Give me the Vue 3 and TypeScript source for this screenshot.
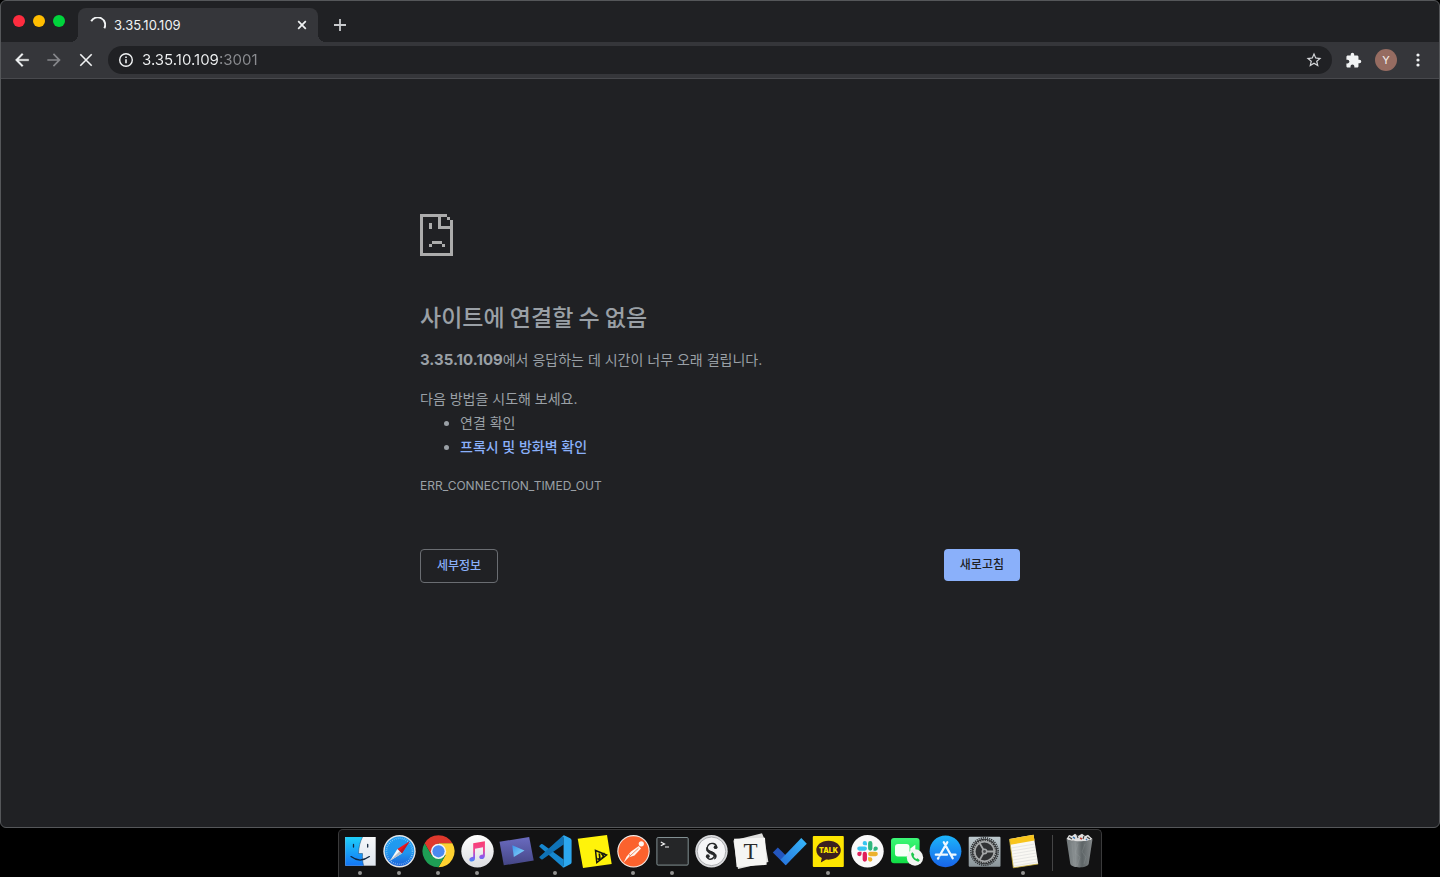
<script setup lang="ts">
import { ref } from 'vue'

const address = ref('3.35.10.109:3001')

const slackArms = [
  { color: '#36c5f0', angle: 0 },
  { color: '#2eb67d', angle: 90 },
  { color: '#ecb22e', angle: 180 },
  { color: '#e01e5a', angle: 270 },
]
</script>

<template>
  <div class="desktop">
    <section class="window">
      <header class="tabstrip">
        <div class="lights">
          <button class="light red" aria-label="Close window"></button>
          <button class="light yellow" aria-label="Minimize window"></button>
          <button class="light green" aria-label="Zoom window"></button>
        </div>
        <div class="tab">
          <svg class="spinner" viewBox="0 0 16 16" aria-hidden="true">
            <path d="M1.200 4.300A7 7 0 0 1 14.300 11.300" fill="none" stroke="#f1f3f4" stroke-width="1.900" />
          </svg>
          <span class="tab-title">3.35.10.109</span>
          <button class="icon-button tab-close" aria-label="Close tab">
            <svg width="16" height="16" viewBox="0 0 16 16"><path d="M4.200 4.200l7.600 7.600M11.800 4.200l-7.600 7.600" stroke="#f1f3f4" stroke-width="1.700" /></svg>
          </button>
        </div>
        <button class="icon-button new-tab" aria-label="New tab">
          <svg width="16" height="16" viewBox="0 0 16 16"><path d="M8 2v12M2 8h12" stroke="#c8cacd" stroke-width="1.800" /></svg>
        </button>
      </header>

      <nav class="toolbar">
        <button class="icon-button nav" aria-label="Back">
          <svg width="20" height="20" viewBox="0 0 24 24" fill="#f1f3f4"><path d="M20 11H7.830l5.590-5.590L12 4l-8 8 8 8 1.410-1.410L7.830 13H20v-2z" stroke="#f1f3f4" stroke-width=".4" /></svg>
        </button>
        <button class="icon-button nav" aria-label="Forward">
          <svg width="20" height="20" viewBox="0 0 24 24" fill="#85868a"><path d="M12 4l-1.410 1.410L16.170 11H4v2h12.170l-5.580 5.590L12 20l8-8z" /></svg>
        </button>
        <button class="icon-button nav" aria-label="Stop">
          <svg width="20" height="20" viewBox="0 0 20 20"><path d="M4.300 4.300l11.400 11.400M15.700 4.300L4.300 15.700" stroke="#f1f3f4" stroke-width="1.600" /></svg>
        </button>
        <div class="omnibox">
          <svg width="16" height="16" viewBox="0 0 16 16" aria-hidden="true">
            <circle cx="8" cy="8" r="6.300" fill="none" stroke="#f1f3f4" stroke-width="1.400" />
            <path d="M8 7.200v4M8 4.500v1.600" stroke="#f1f3f4" stroke-width="1.600" />
          </svg>
          <input v-model="address" class="url" type="text" aria-label="Address" />
          <button class="icon-button" aria-label="Bookmark this page">
            <svg width="18" height="18" viewBox="0 0 24 24" fill="#d5d7da"><path d="M22 9.240l-7.190-.62L12 2 9.190 8.630 2 9.240l5.460 4.730L5.820 21 12 17.270 18.180 21l-1.630-7.030L22 9.240zM12 15.400l-3.760 2.270 1-4.280-3.320-2.880 4.380-.38L12 6.100l1.710 4.040 4.380.38-3.320 2.880 1 4.280L12 15.400z" /></svg>
          </button>
        </div>
        <button class="icon-button extensions" aria-label="Extensions">
          <svg width="17" height="17" viewBox="0 0 24 24" fill="#f1f3f4"><path d="M20.500 11H19V7c0-1.100-.9-2-2-2h-4V3.500a2.500 2.500 0 0 0-5 0V5H4c-1.100 0-1.990.9-1.990 2v3.800H3.500c1.490 0 2.700 1.210 2.700 2.700s-1.210 2.700-2.700 2.700H2V20c0 1.100.9 2 2 2h3.800v-1.500c0-1.490 1.210-2.700 2.700-2.700 1.490 0 2.700 1.210 2.700 2.700V22H17c1.100 0 2-.9 2-2v-4h1.500a2.500 2.500 0 0 0 0-5z" /></svg>
        </button>
        <button class="avatar" aria-label="Profile Y">Y</button>
        <button class="icon-button menu" aria-label="Menu">
          <svg width="18" height="18" viewBox="0 0 18 18" fill="#f1f3f4"><circle cx="9" cy="4" r="1.600" /><circle cx="9" cy="9" r="1.600" /><circle cx="9" cy="14" r="1.600" /></svg>
        </button>
      </nav>

      <main class="page">
        <div class="message">
          <svg class="sad" viewBox="0 0 33 42" fill="#acacac" shape-rendering="crispEdges" aria-hidden="true">
            <path d="M0 0H27V3H3V39H30V15H18V3H21V12H30V6H33V42H0ZM27 3H30V6H27ZM9 9H12V15H9ZM12 27H22V30H12ZM9 30H12V33H9ZM22 30H25V33H22Z" />
          </svg>
          <h1>사이트에 연결할 수 없음</h1>
          <p class="summary"><strong>3.35.10.109</strong>에서 응답하는 데 시간이 너무 오래 걸립니다.</p>
          <p class="hint">다음 방법을 시도해 보세요.</p>
          <ul>
            <li>연결 확인</li>
            <li><a href="#">프록시 및 방화벽 확인</a></li>
          </ul>
          <p class="code">ERR_CONNECTION_TIMED_OUT</p>
          <div class="actions">
            <button class="details">세부정보</button>
            <button class="reload">새로고침</button>
          </div>
        </div>
      </main>
    </section>

    <footer class="shelf">
      <div class="dock">
        <button class="app running" aria-label="Finder">
          <svg viewBox="0 0 39 40">
            <defs>
              <linearGradient id="finderBlue" x1="0" y1="0" x2="0" y2="1"><stop offset="0" stop-color="#1fd0fb" /><stop offset="1" stop-color="#1375f5" /></linearGradient>
              <linearGradient id="finderPale" x1="0" y1="0" x2="0" y2="1"><stop offset="0" stop-color="#f6f8fa" /><stop offset="1" stop-color="#dfe6ef" /></linearGradient>
            </defs>
            <rect x="4.300" y="6" width="30.400" height="28.700" fill="url(#finderPale)" />
            <path d="M4.300 6H21.500C19 11 17.800 16 17.500 22.500H21.500C21.300 27 21.600 31 22.600 34.700H4.300Z" fill="url(#finderBlue)" />
            <path d="M21.500 6C19 11 17.800 16 17.500 22.500H21.500C21.300 27 21.600 31 22.600 34.700" fill="none" stroke="#16466f" stroke-width=".5" />
            <path d="M12.500 13.500v2.600M26.700 13.500v2.600M10 25.600Q19 32.500 28.400 25.600" fill="none" stroke="#10263e" stroke-width="1.300" stroke-linecap="round" />
          </svg>
        </button>
        <button class="app running" aria-label="Safari">
          <svg viewBox="0 0 39 40">
            <defs><linearGradient id="safariBlue" x1="0" y1="0" x2="0" y2="1"><stop offset="0" stop-color="#1e9df2" /><stop offset=".55" stop-color="#2196ee" /><stop offset="1" stop-color="#1c62da" /></linearGradient></defs>
            <circle cx="19.500" cy="20.300" r="16.200" fill="#e6e7e9" />
            <circle cx="19.500" cy="20.300" r="14.800" fill="url(#safariBlue)" />
            <circle cx="19.500" cy="20.300" r="13" fill="none" stroke="#bfe3ff" stroke-width="1.600" stroke-dasharray=".5 1.540" />
            <path d="M29.700 10.300L17.400 18 21.800 22.500Z" fill="#f5151b" />
            <path d="M29.700 10.300L21.800 22.500 19.600 20.200Z" fill="#bb1c28" />
            <path d="M10 29.700L17.400 18 21.800 22.500Z" fill="#f7f8f9" />
            <path d="M10 29.700L21.800 22.500 19.600 20.200Z" fill="#b9bdc5" />
          </svg>
        </button>
        <button class="app running" aria-label="Chrome">
          <svg viewBox="0 0 39 40">
            <g transform="translate(19.500 20.300)">
              <path d="M0-8H13.860A16 16 0 0 0-13.860-8L-6.930 4Z" fill="#df382c" />
              <path d="M0-8H13.860A16 16 0 0 0-13.860-8L-6.930 4Z" fill="#fed130" transform="rotate(120)" />
              <path d="M0-8H13.860A16 16 0 0 0-13.860-8L-6.930 4Z" fill="#1e9e55" transform="rotate(240)" />
              <circle r="7.600" fill="#f4f5f5" />
              <circle r="6.100" fill="#4a89f0" />
            </g>
          </svg>
        </button>
        <button class="app running" aria-label="Music">
          <svg viewBox="0 0 39 40">
            <defs>
              <linearGradient id="note" x1="0" y1="0" x2="0" y2="1"><stop offset="0" stop-color="#fb3c70" /><stop offset=".45" stop-color="#ee4a93" /><stop offset=".75" stop-color="#8f55ec" /><stop offset="1" stop-color="#3f8df5" /></linearGradient>
              <linearGradient id="musicDisc" x1="0" y1="0" x2="0" y2="1"><stop offset="0" stop-color="#fff" /><stop offset="1" stop-color="#dcdde1" /></linearGradient>
            </defs>
            <circle cx="19.500" cy="20.300" r="16.200" fill="url(#musicDisc)" />
            <path d="M15.200 12.300L26.900 10.300V24.500C26.900 27 25.400 28.100 23.600 28.100 20.700 28.100 20.500 24.500 23.300 23.800L25 23.400V16.200L17 17.700V27.200C17 29.400 15.500 30.500 13.700 30.500 10.800 30.500 10.600 27 13.300 26.200L15.200 25.700Z" fill="url(#note)" />
          </svg>
        </button>
        <button class="app" aria-label="Video player">
          <svg viewBox="0 0 39 40">
            <defs>
              <linearGradient id="purple" x1="0" y1="0" x2="0" y2="1"><stop offset="0" stop-color="#6a6bc0" /><stop offset="1" stop-color="#454686" /></linearGradient>
              <linearGradient id="play" x1="0" y1="0" x2="1" y2="1"><stop offset="0" stop-color="#3b92ea" /><stop offset="1" stop-color="#8edcfb" /></linearGradient>
            </defs>
            <path d="M2.500 10.800L32.200 6 36.700 29.500 6.800 34.300Z" fill="url(#purple)" />
            <path d="M15.300 14.300L27.500 19.500 16.800 26Z" fill="url(#play)" />
          </svg>
        </button>
        <button class="app running" aria-label="Code editor">
          <svg viewBox="0 0 39 40">
            <path d="M3.500 15.700Q3 15 3.700 14.400L5.300 13.100Q6 12.700 6.700 13.200L27.600 28.500V36.300L26 35.600Z" fill="#1687cf" />
            <path d="M3.500 25.700Q3 26.400 3.700 27L5.300 28.300Q6 28.700 6.700 28.200L27.600 13.500V4.400L26 5.600Z" fill="#0f72b6" />
            <path d="M25.800 35.400C26.700 36.100 27.600 35.200 27.600 34.200V7C27.600 5.600 26.600 4.800 25.800 5.600L28 4.300 34.200 7.200Q35.600 8 35.600 9.500V31.200Q35.600 32.500 34.200 33.300L28.400 36.300Q27 37 25.800 35.400Z" fill="#2ca7ef" />
          </svg>
        </button>
        <button class="app" aria-label="Yellow note">
          <svg viewBox="0 0 39 40">
            <path d="M2.700 7.800L32 4 36.700 33 8 37Z" fill="#fff30a" />
            <path d="M20.500 19.500L21.800 31.500 31.500 24Z" fill="none" stroke="#151510" stroke-width="1.500" />
            <path d="M24.300 22.500l.8 6.500M22.300 27.500l2.800 1.300M29.500 22.300l-2.300 1 1.600 2.200-2 1.700" fill="none" stroke="#151510" stroke-width="1.700" />
          </svg>
        </button>
        <button class="app running" aria-label="Postman">
          <svg viewBox="0 0 39 40">
            <circle cx="19.500" cy="20.300" r="16.200" fill="#f5ece7" />
            <circle cx="19.500" cy="20.300" r="15.100" fill="#fb622d" />
            <circle cx="27.300" cy="12.800" r="2.600" fill="#fff4ed" />
            <path d="M24.800 15L27 17.400 20.500 24.600 14.500 26.500 9.500 31.800 12.500 25.800 17 20.500Z" fill="#fff4ed" />
            <path d="M24.500 17.200L14.800 26M16.500 25.200l-1.200-2" stroke="#e8612c" stroke-width=".7" />
          </svg>
        </button>
        <button class="app running" aria-label="Terminal">
          <svg viewBox="0 0 39 40">
            <rect x="3.900" y="6.500" width="31.300" height="27.600" rx="1.200" fill="#252628" stroke="#829093" />
            <path d="M7.800 11l3.700 1.900-3.700 1.900M12 16h4" fill="none" stroke="#f0f0f0" stroke-width="1.200" />
          </svg>
        </button>
        <button class="app" aria-label="Scrivener">
          <svg viewBox="0 0 39 40">
            <circle cx="19.500" cy="20.300" r="16.200" fill="#dadbde" />
            <circle cx="19.500" cy="20.300" r="14.300" fill="#f5f5f7" stroke="#9b9ca0" stroke-width=".8" />
            <path d="M24.500 16.500C24.500 12 18.500 11 16 14.500 13.800 18 16.500 19.800 19.500 21 22.500 22.300 23.300 23.700 21.800 26.300 19 29.800 14.500 28 15 24.700" fill="none" stroke="#26282a" stroke-width="1.400" />
            <path d="M14.900 16.500C15 20 18 20.200 20.800 21.300 25 23 25 26 22.600 28.200 24 24.800 21 23.800 18.200 22.600 15 21.200 13.800 19 14.900 16.500Z" fill="#26282a" stroke="#26282a" />
            <circle cx="23.600" cy="16.200" r="1.900" fill="#26282a" /><circle cx="15.800" cy="25.200" r="1.900" fill="#26282a" />
          </svg>
        </button>
        <button class="app" aria-label="Typora">
          <svg viewBox="0 0 39 40">
            <path d="M2.400 9.500L18 5.500 31 2.300 33.400 8 37.400 31 22 34.500 7 38 5.200 28Z" fill="#dededd" />
            <path d="M3 7.800L34 6.700 35.700 33.800 5.600 36Z" fill="#f5f5f4" />
            <text x="19.500" y="28" text-anchor="middle" font-family="Liberation Serif, serif" font-size="23" fill="#292929">T</text>
          </svg>
        </button>
        <button class="app" aria-label="To Do">
          <svg viewBox="0 0 39 40">
            <defs><linearGradient id="tick" x1="0" y1="1" x2="1" y2="0"><stop offset="0" stop-color="#2773dc" /><stop offset="1" stop-color="#36bafb" /></linearGradient></defs>
            <path d="M2.800 21.500L7.800 16.400 20.500 29 15.700 34.300Z" fill="#2456be" />
            <path d="M10.500 28.800L31.300 7 36.800 12.800 15.700 34.300Z" fill="url(#tick)" />
          </svg>
        </button>
        <button class="app running" aria-label="KakaoTalk">
          <svg viewBox="0 0 39 40">
            <rect x="3.800" y="5" width="31" height="31" rx="1" fill="#fde500" />
            <path d="M19.500 9.700C12 9.700 7.300 14 7.300 19.100 7.300 22.500 9.300 25.400 12.800 27L11.800 31.600 17 28.500C26 29.500 31.800 24.800 31.800 19.100 31.800 14 27 9.700 19.500 9.700Z" fill="#3b2020" />
            <text x="19.500" y="22" text-anchor="middle" font-family="Inter, sans-serif" font-weight="900" font-size="7" fill="#fde500">TALK</text>
          </svg>
        </button>
        <button class="app" aria-label="Slack">
          <svg viewBox="0 0 39 40">
            <circle cx="19.500" cy="20.300" r="16.200" fill="#f9f9fa" />
            <g transform="translate(9.200 10) scale(.860)">
              <path v-for="arm in slackArms" :key="arm.color" :fill="arm.color" :transform="`rotate(${arm.angle} 12 12)`" d="M8.834 5.042a2.528 2.528 0 0 1-2.521-2.520A2.528 2.528 0 0 1 8.834 0a2.528 2.528 0 0 1 2.521 2.522v2.520H8.834zM8.834 6.313a2.528 2.528 0 0 1 2.521 2.521 2.528 2.528 0 0 1-2.521 2.521H2.522A2.528 2.528 0 0 1 0 8.834a2.528 2.528 0 0 1 2.522-2.521h6.312z" />
            </g>
          </svg>
        </button>
        <button class="app" aria-label="FaceTime">
          <svg viewBox="0 0 39 40">
            <defs><linearGradient id="face" x1="0" y1="0" x2="0" y2="1"><stop offset="0" stop-color="#3cf777" /><stop offset="1" stop-color="#10dc45" /></linearGradient></defs>
            <rect x="4" y="7" width="28.600" height="25.300" rx="3" fill="url(#face)" />
            <rect x="8" y="13" width="14.500" height="12.500" rx="3" fill="#f5fff8" />
            <path d="M23.300 17.500L28.300 13.700V25L23.300 21.500Z" fill="#f5fff8" />
            <circle cx="28" cy="26.500" r="8.200" fill="#f2f4f3" />
            <path d="M24.300 22.300C23.500 25.500 27.500 30.300 31.500 30.700L32.800 29.200 30.600 27.200 29.200 28C27.900 27.300 27.200 26.400 26.600 25.100L27.400 23.700 25.600 21.200Z" fill="#1dc74d" />
          </svg>
        </button>
        <button class="app" aria-label="App Store">
          <svg viewBox="0 0 39 40">
            <defs><linearGradient id="store" x1="0" y1="0" x2="0" y2="1"><stop offset="0" stop-color="#1cb5fb" /><stop offset="1" stop-color="#1864ea" /></linearGradient></defs>
            <circle cx="19.500" cy="20.300" r="15.900" fill="url(#store)" />
            <path d="M17.800 11.300L26.700 27.200M21.300 11.300L13.700 24.500M9.800 23.700H21M25.700 23.700H29.500M12.500 26.700l-.5.900" fill="none" stroke="#edf8ff" stroke-width="2.300" stroke-linecap="round" />
          </svg>
        </button>
        <button class="app" aria-label="System Preferences">
          <svg viewBox="0 0 39 40">
            <defs><linearGradient id="prefs" x1="0" y1="0" x2="0" y2="1"><stop offset="0" stop-color="#bdc9ce" /><stop offset="1" stop-color="#8b959a" /></linearGradient></defs>
            <rect x="3.700" y="5.700" width="31.800" height="30" rx="1" fill="url(#prefs)" />
            <circle cx="19.500" cy="20.500" r="13.700" fill="none" stroke="#303234" stroke-width="1.500" stroke-dasharray="1.250 .900" />
            <circle cx="19.500" cy="20.500" r="12.800" fill="#303234" />
            <circle cx="19.500" cy="20.500" r="9.800" fill="none" stroke="#a4a7a8" stroke-width="1.700" />
            <circle cx="19.500" cy="20.500" r="11.200" fill="none" stroke="#a4a7a8" stroke-width="1.200" stroke-dasharray="1.170 1.170" />
            <path d="M19.500 20.500L14.500 11.900M19.500 20.500H29.500M19.500 20.500L14.500 29.100" stroke="#a4a7a8" stroke-width="1.800" />
            <circle cx="19.500" cy="20.500" r="2.900" fill="#a4a7a8" /><circle cx="19.500" cy="20.500" r="1.400" fill="#4b4d4f" />
          </svg>
        </button>
        <button class="app running" aria-label="Notes">
          <svg viewBox="0 0 39 40">
            <path d="M5.500 8L29.500 3.700 34.200 33 9.300 36.800Z" fill="#f9f8f3" />
            <path d="M5.500 8L29.500 3.700 30.600 9.600 6.300 13.700Z" fill="#f8c51c" />
            <path d="M7.200 17l23.500-4M7.700 20l23.500-4M8.200 23l23.500-4M8.600 26l23.500-4M9 29l23.500-4M9.300 32l23.800-4M9.600 35l23.800-4" stroke="#dededc" stroke-width=".7" />
            <path d="M5.500 8L9.300 36.800 34.200 33" fill="none" stroke="#c8ac34" stroke-width=".8" />
          </svg>
        </button>
        <span class="divider"></span>
        <button class="app" aria-label="Trash">
          <svg viewBox="0 0 39 40">
            <defs><linearGradient id="bin" x1="0" y1="0" x2="1" y2="0"><stop offset="0" stop-color="#6f7678" /><stop offset=".35" stop-color="#8a9092" /><stop offset=".6" stop-color="#5d6466" /><stop offset="1" stop-color="#84898b" /></linearGradient></defs>
            <path d="M6.500 8.300C10 10.500 29 10.500 32.500 8.300L28.700 33C27 37.500 12 37.500 10.300 33Z" fill="url(#bin)" />
            <path d="M6.500 8L9 4 12 5 15 2.700 18 5 22 2.800 25 5 28 3.700 32.500 8C29 11 10 11 6.500 8Z" fill="#dfdfdf" />
            <path d="M9 6l3 2M17 4l1 3M24 5l-1 3M27 6l3 2" stroke="#3b3d3e" stroke-width="1.100" />
            <path d="M13 6l2 1.500" stroke="#2d6fb0" stroke-width="1.500" /><path d="M20 7l2 1" stroke="#c23f32" stroke-width="1.500" /><path d="M26 8l1 1" stroke="#3b73b5" stroke-width="1.400" />
            <path d="M12 12l2 22M18 13l-3 9 5 4-3 9M25 13l-3 8 4 5-2 7" fill="none" stroke="#9ea4a5" stroke-width=".7" opacity=".35" />
          </svg>
        </button>
      </div>
    </footer>
  </div>
</template>

<style>
body {
  margin: 0;
  background: #000;
}
</style>

<style scoped>
.desktop {
  display: flex;
  flex-direction: column;
  min-height: 100vh;
  background: #000;
  font-family: Inter, "Noto Sans CJK KR", sans-serif;
}

button {
  margin: 0;
  padding: 0;
  border: 0;
  background: none;
  font-family: inherit;
  cursor: pointer;
}

svg {
  display: block;
  flex: none;
}

.window {
  flex: 1;
  display: flex;
  flex-direction: column;
  box-sizing: border-box;
  border: 1px solid #55575a;
  border-radius: 6px;
  background: #202124;
  overflow: hidden;
}

.tabstrip {
  display: flex;
  align-items: flex-end;
  height: 41px;
}

.lights {
  display: flex;
  align-items: center;
  gap: 8px;
  width: 65px;
  height: 42px;
  padding-left: 12px;
  box-sizing: border-box;
}

.light {
  width: 12px;
  height: 12px;
  border-radius: 50%;
}

.red { background: #fe2c3f; }
.yellow { background: #ffbd00; }
.green { background: #00d43c; }

.tab {
  position: relative;
  display: flex;
  align-items: center;
  box-sizing: border-box;
  width: 240px;
  height: 34px;
  margin-left: 12px;
  padding: 0 8px 0 12px;
  border-radius: 8px 8px 0 0;
  background: #35363a;
}

.tab::before,
.tab::after {
  content: "";
  position: absolute;
  bottom: 0;
  width: 8px;
  height: 8px;
}

.tab::before {
  right: 100%;
  background: radial-gradient(circle at 0 0, transparent 8px, #35363a 8px);
}

.tab::after {
  left: 100%;
  background: radial-gradient(circle at 100% 0, transparent 8px, #35363a 8px);
}

.spinner {
  width: 16px;
  height: 16px;
}

.tab-title {
  flex: 1;
  margin-left: 8px;
  color: #f1f3f4;
  font-size: 13px;
  line-height: 16px;
}

.icon-button {
  display: flex;
  align-items: center;
  justify-content: center;
}

.new-tab {
  width: 28px;
  height: 34px;
  margin-left: 8px;
}

.toolbar {
  display: flex;
  align-items: center;
  box-sizing: border-box;
  height: 37px;
  padding: 0 7px 0 5px;
  border-bottom: 1px solid #48494d;
  background: #35363a;
}

.nav {
  width: 32px;
  height: 28px;
}

.omnibox {
  flex: 1;
  display: flex;
  align-items: center;
  gap: 8px;
  height: 28px;
  margin-left: 6px;
  padding: 0 9px 0 10px;
  border-radius: 14px;
  background: #202124;
}

.url {
  flex: 1;
  min-width: 0;
  padding: 0;
  border: 0;
  outline: 0;
  color: #f1f3f4;
  background: linear-gradient(90deg, #f1f3f4 78px, #8b8d91 78px);
  background-clip: text;
  -webkit-background-clip: text;
  -webkit-text-fill-color: transparent;
  font-family: Inter, sans-serif;
  font-size: 15px;
  line-height: 20px;
}

.extensions {
  width: 22px;
  height: 28px;
  margin-left: 10px;
}

.avatar {
  width: 22px;
  height: 22px;
  margin-left: 11px;
  border-radius: 50%;
  background: #966c61;
  color: #f6efed;
  font-size: 11px;
  line-height: 22px;
}

.menu {
  width: 28px;
  height: 28px;
  margin-left: 7px;
}

.page {
  flex: 1;
  padding: 135px 20px 40px;
}

.message {
  max-width: 600px;
  margin: 0 auto;
  color: #9aa0a6;
  font-size: 14px;
  line-height: 24px;
}

.sad {
  width: 33px;
  height: 42px;
}

h1 {
  margin: 44px 0 16px;
  font-family: "Noto Sans CJK KR", sans-serif;
  font-size: 23px;
  font-weight: 500;
  line-height: 32px;
}

p {
  margin: 0;
}

.summary {
  margin-bottom: 15px;
}

.summary strong {
  font-size: 15px;
  font-weight: 700;
}

ul {
  margin: 0;
  padding-left: 40px;
}

a {
  color: #8ab0fa;
  font-weight: 500;
  text-decoration: none;
}

.code {
  margin-top: 15px;
  font-size: 12px;
}

.actions {
  display: flex;
  align-items: flex-start;
  justify-content: space-between;
  margin-top: 51px;
}

.details,
.reload {
  padding: 0 16px;
  border-radius: 4px;
  font-size: 12px;
  font-weight: 500;
  line-height: 32px;
}

.details {
  border: 1px solid #6a6d72;
  color: #8ab0fa;
}

.reload {
  background: #8ab0fa;
  color: #202124;
}

.shelf {
  display: flex;
  justify-content: center;
  height: 49px;
}

.dock {
  display: flex;
  box-sizing: border-box;
  height: 48px;
  margin-top: 1px;
  padding: 1px 2px 0;
  border: 1px solid #3a3a3b;
  border-bottom: 0;
  border-radius: 5px 5px 0 0;
  background: #121213;
}

.app {
  position: relative;
  width: 39px;
  height: 46px;
}

.app svg {
  width: 39px;
  height: 40px;
  margin-bottom: 6px;
}

.running::after {
  content: "";
  position: absolute;
  bottom: 2px;
  left: 17px;
  width: 4px;
  height: 4px;
  border-radius: 50%;
  background: #929292;
}

.divider {
  width: 1px;
  height: 36px;
  margin: 4px 7px 0 9px;
  background: #454546;
}
</style>
